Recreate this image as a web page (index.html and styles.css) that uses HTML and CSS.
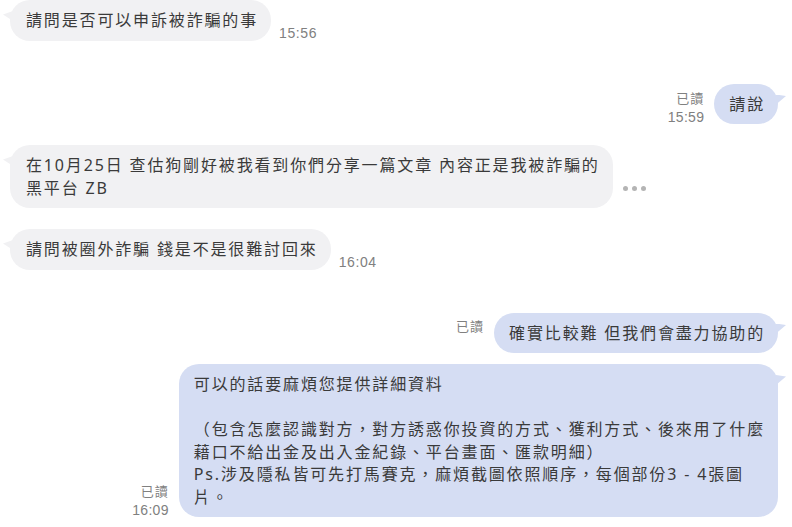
FILE: index.html
```html
<!DOCTYPE html>
<html lang="zh-Hant">
<head>
<meta charset="utf-8">
<title>Chat</title>
<link rel="stylesheet" href="styles.css">
</head>
<body>
<main class="chat">
  <div class="row row--in">
    <div class="bubble bubble--in">請問是否可以申訴被詐騙的事</div>
    <div class="meta meta--in"><span>15:56</span></div>
  </div>

  <div class="row row--out row--gap-lg">
    <div class="meta meta--out"><span>已讀</span><span class="meta__time">15:59</span></div>
    <div class="bubble bubble--out">請說</div>
  </div>

  <div class="row row--in row--gap-md">
    <div class="bubble bubble--in">在10月25日 查估狗剛好被我看到你們分享一篇文章 內容正是我被詐騙的<br>黑平台 ZB</div>
    <div class="dots"><i></i><i></i><i></i></div>
  </div>

  <div class="row row--in row--gap-md">
    <div class="bubble bubble--in">請問被圈外詐騙 錢是不是很難討回來</div>
    <div class="meta meta--in"><span>16:04</span></div>
  </div>

  <div class="row row--out row--gap-lg">
    <div class="meta meta--out meta--top"><span>已讀</span></div>
    <div class="bubble bubble--out">確實比較難 但我們會盡力協助的</div>
  </div>

  <div class="row row--out row--gap-sm">
    <div class="meta meta--out"><span>已讀</span><span class="meta__time">16:09</span></div>
    <div class="bubble bubble--out">可以的話要麻煩您提供詳細資料<br><br>（包含怎麼認識對方，對方誘惑你投資的方式、獲利方式、後來用了什麼<br>藉口不給出金及出入金紀錄、平台畫面、匯款明細）<br>Ps.涉及隱私皆可先打馬賽克，麻煩截圖依照順序，每個部份3 - 4張圖<br>片。</div>
  </div>
</main>
</body>
</html>
```
FILE: styles.css
```css
* { box-sizing: border-box; }

html, body {
  margin: 0;
  padding: 0;
  background: #ffffff;
}

body {
  font-family: "Noto Sans", "Noto Sans CJK TC", sans-serif;
  color: #3a3a3a;
  width: 792px;
  height: 527px;
  overflow: hidden;
}

.chat {
  display: flex;
  flex-direction: column;
}

.row {
  display: flex;
  align-items: flex-end;
}

.row--in {
  justify-content: flex-start;
  padding-left: 10px;
  gap: 8px;
}

.row--out {
  justify-content: flex-end;
  padding-right: 14px;
  gap: 10px;
}

.row--gap-lg { margin-top: 43px; }
.row--gap-md { margin-top: 21px; }
.row--gap-sm { margin-top: 11px; }

.bubble {
  position: relative;
  font-size: 16px;
  letter-spacing: 1.85px;
  line-height: 22.5px;
  padding: 9px 13px 9px 16px;
  border-radius: 20px;
  white-space: nowrap;
}

.bubble--in {
  background: #f1f1f3;
}

.bubble--out {
  background: #d5ddf3;
  padding-left: 15px;
}

.bubble--in::before,
.bubble--out::before {
  content: "";
  position: absolute;
  width: 10px;
  height: 10px;
  top: 11px;
}

.bubble--in::before {
  left: -7px;
  background: #f1f1f3;
  clip-path: polygon(0 35%, 100% 0, 100% 100%);
}

.bubble--out::before {
  right: -8px;
  background: #d5ddf3;
  clip-path: polygon(0 0, 100% 15%, 0 100%);
}

.meta {
  display: flex;
  flex-direction: column;
  color: #808080;
  font-family: "Liberation Sans", "Noto Sans CJK TC", sans-serif;
  line-height: 18px;
}

.meta--in {
  font-size: 14px;
  letter-spacing: 0.6px;
  margin-bottom: -1px;
}

.meta--out {
  align-items: flex-end;
  font-size: 13px;
  letter-spacing: 1px;
  margin-bottom: -2px;
}

.meta__time {
  font-size: 14px;
  letter-spacing: 0.3px;
}

.meta--top {
  align-self: flex-start;
  margin-top: 5px;
  margin-bottom: 0;
}

.dots {
  display: flex;
  gap: 4px;
  margin-left: 2px;
  margin-bottom: 17px;
}

.dots i {
  display: block;
  width: 5px;
  height: 5px;
  border-radius: 50%;
  background: #b4b4b4;
}
```
